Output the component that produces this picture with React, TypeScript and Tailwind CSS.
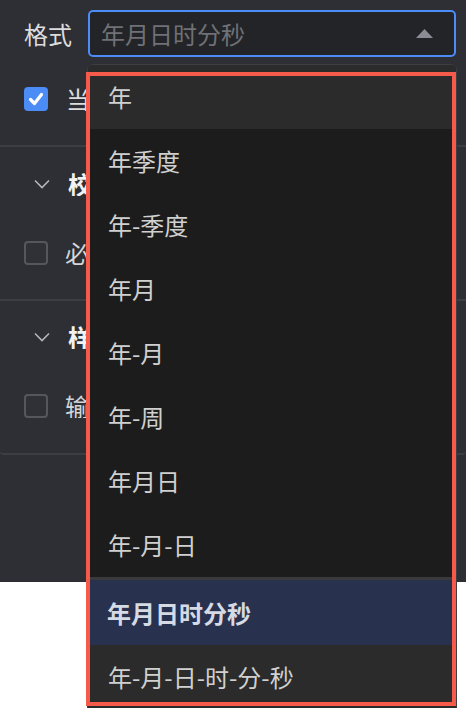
import React from "react";

const font = { fontFamily: '"Noto Sans CJK SC", "Noto Sans", sans-serif' };

function Checkbox({ checked }: { checked?: boolean }) {
  if (checked) {
    return (
      <div className="w-[24px] h-[24px] rounded-[4px] bg-[#4b8cf6] flex items-center justify-center shrink-0">
        <svg width="18" height="18" viewBox="0 0 18 18">
          <path d="M3.5 9.5 L7.5 13.5 L14.5 4.5" fill="none" stroke="#ffffff" strokeWidth="3.2" strokeLinecap="round" strokeLinejoin="round" />
        </svg>
      </div>
    );
  }
  return <div className="w-[24px] h-[24px] rounded-[4px] border-2 border-[#55575d] bg-[#2f3136] shrink-0" />;
}

function Chevron() {
  return (
    <svg width="16" height="10" viewBox="0 0 16 10" className="shrink-0">
      <polyline points="1,1.5 8,8.5 15,1.5" fill="none" stroke="#b4b6bc" strokeWidth="1.6" />
    </svg>
  );
}

const items = ["年", "年季度", "年-季度", "年月", "年-月", "年-周", "年月日", "年-月-日"];

export default function App() {
  return (
    <div className="relative w-[466px] h-[708px] bg-white overflow-hidden" style={font}>
      <div className="h-[582px] bg-[#2d2f35] flex flex-col">
        <section className="h-[147px] border-b-2 border-[#3c3e44] flex flex-col">
          <div className="h-[67px] flex items-center pl-6 gap-4">
            <span className="text-[24px] leading-none text-[#dcdcde] w-[48px]">格式</span>
            <div className="w-[368px] h-[47px] border-2 border-[#4b8cf6] rounded-[5px] bg-[#232428] flex items-center justify-between pl-[11px] pr-[21px]">
              <span className="text-[24px] leading-none text-[#6f7176]">年月日时分秒</span>
              <svg width="17" height="9" viewBox="0 0 17 9">
                <polygon points="8.5,0 17,9 0,9" fill="#8b8d94" />
              </svg>
            </div>
          </div>
          <div className="h-[64px] flex items-center pl-6 gap-[18px]">
            <Checkbox checked />
            <span className="w-[21px] overflow-hidden whitespace-nowrap text-[24px] leading-none text-[#dcdcde]">当前时间</span>
          </div>
        </section>
        <section className="h-[154px] border-b-2 border-[#3c3e44] flex flex-col">
          <div className="h-[74px] flex items-center pl-[34px] gap-[18px]">
            <Chevron />
            <span className="w-[19px] overflow-hidden whitespace-nowrap text-[24px] leading-none font-bold text-[#f2f2f2]">校验</span>
          </div>
          <div className="h-[64px] flex items-center pl-6 gap-[17px]">
            <Checkbox />
            <span className="w-[22px] overflow-hidden whitespace-nowrap text-[24px] leading-none text-[#d6d6d8]">必填</span>
          </div>
        </section>
        <section className="h-[154px] border-b-2 border-[#3c3e44] rounded-b-[4px] flex flex-col">
          <div className="h-[72px] flex items-center pl-[34px] gap-[18px]">
            <Chevron />
            <span className="w-[19px] overflow-hidden whitespace-nowrap text-[24px] leading-none font-bold text-[#f2f2f2]">样式</span>
          </div>
          <div className="h-[66px] flex items-center pl-6 gap-[17px]">
            <Checkbox />
            <span className="w-[22px] overflow-hidden whitespace-nowrap text-[24px] leading-none text-[#d6d6d8]">输入框</span>
          </div>
        </section>
      </div>

      <div className="absolute left-[87px] top-[64px] w-[370px] h-[660px] border border-[#3d3e42] rounded-[6px] bg-[#1c1c1c] overflow-hidden flex flex-col">
        {items.map((t, i) => (
          <div
            key={t}
            className={
              i === 0
                ? "h-[64px] shrink-0 flex items-center pl-[20px] bg-[#2b2b2b] text-[24px] leading-none text-[#d0d0d0]"
                : "h-[64px] shrink-0 flex items-center pl-[20px] text-[24px] leading-none text-[#d0d0d0]"
            }
          >
            {t}
          </div>
        ))}
        <div className="h-[3px] shrink-0 bg-[#3a3a3c]" />
        <div className="h-[65px] shrink-0 flex items-center pl-[19px] bg-[#28324e] text-[24px] leading-none font-bold text-[#d6dae4]">
          年月日时分秒
        </div>
        <div className="h-[64px] shrink-0 flex items-center pl-[20px] bg-[#2b2b2b] text-[24px] leading-none text-[#d0d0d0]">
          年-月-日-时-分-秒
        </div>
      </div>

      <div className="absolute left-[86px] top-[72px] w-[370px] h-[634px] border-4 border-[#f55a4a] pointer-events-none" />
    </div>
  );
}
